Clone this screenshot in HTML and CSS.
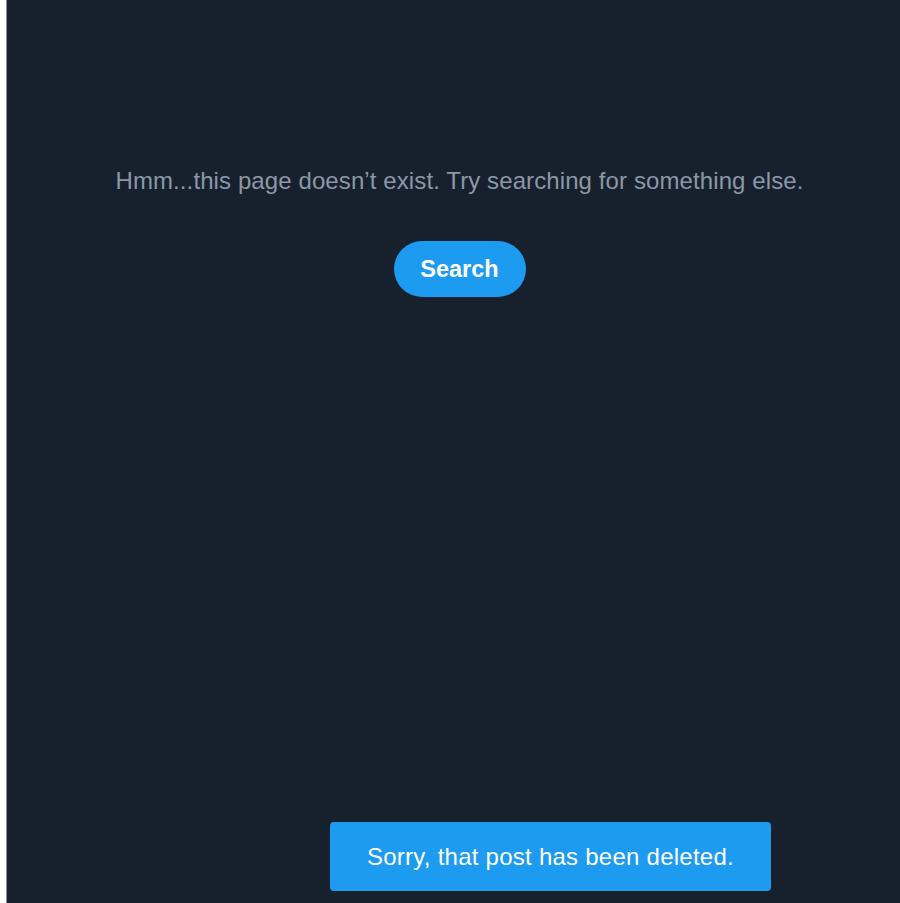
FILE: index.html
```html
<!DOCTYPE html>
<html lang="en">
<head>
<meta charset="utf-8">
<title>Page not found</title>
<link rel="stylesheet" href="styles.css">
</head>
<body>
<div class="shell">
  <main class="main">
    <section class="empty">
      <p class="empty-text">Hmm...this page doesn’t exist. Try searching for something else.</p>
      <button class="search-btn" type="button">Search</button>
    </section>
  </main>
  <div class="toast" role="alert">Sorry, that post has been deleted.</div>
</div>
</body>
</html>
```
FILE: styles.css
```css
html, body {
  margin: 0;
  padding: 0;
  height: 100%;
}
body {
  background: #ffffff;
  font-family: "Liberation Sans", Arial, sans-serif;
  overflow: hidden;
}
.shell {
  position: relative;
  height: 903px;
  padding-left: 6px;
}
.main {
  height: 100%;
  background: #17202d;
  border-left: 1px solid #8a9199;
  box-sizing: border-box;
  padding-left: 12px;
}
.empty {
  display: flex;
  flex-direction: column;
  align-items: center;
  padding-top: 165px;
}
.empty-text {
  margin: 0;
  color: #8b98a5;
  font-size: 24px;
  line-height: 32px;
  letter-spacing: 0.1px;
}
.search-btn {
  margin-top: 44px;
  width: 132px;
  height: 56px;
  border: none;
  border-radius: 28px;
  background: #1d9bf0;
  color: #ffffff;
  font-family: "Liberation Sans", Arial, sans-serif;
  font-weight: 700;
  font-size: 23.5px;
  cursor: pointer;
}
.toast {
  position: absolute;
  left: 330px;
  top: 822px;
  width: 441px;
  height: 69px;
  display: flex;
  align-items: center;
  justify-content: center;
  background: #1d9bf0;
  border-radius: 4px;
  color: #ffffff;
  font-size: 24px;
  letter-spacing: 0.25px;
}
```
